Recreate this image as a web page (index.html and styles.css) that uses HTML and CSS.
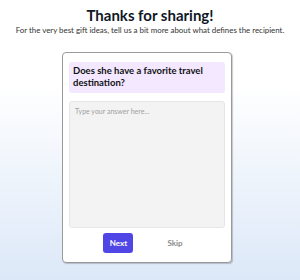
FILE: index.html
```html
<!DOCTYPE html>
<html lang="en">
<head>
    <meta charset="UTF-8">
    <meta name="viewport" content="width=device-width, initial-scale=1.0">
    <title>Thanks for sharing</title>
    <link rel="stylesheet" href="styles.css">
</head>
<body>

    <header class="intro">
        <h1>Thanks for sharing!</h1>
        <p>For the very best gift ideas, tell us a bit more about what defines the recipient.</p>
    </header>

    <div class="card">
        <div class="question">Does she have a favorite travel destination?</div>
        <textarea class="answer" placeholder="Type your answer here..."></textarea>
        <div class="actions">
            <button class="btn-next">Next</button>
            <button class="btn-skip">Skip</button>
        </div>
    </div>

</body>
</html>
```

FILE: styles.css
```css
body {
    margin: 0;
    height: 280px;
    font-family: Lato, "Open Sans", Arial, sans-serif;
    color: #1a1a2e;
    background: linear-gradient(to bottom, #ffffff 0%, #ffffff 30%, #dce8f8 100%);
}
.intro {
    text-align: center;
    padding-top: 5px;
}
.intro h1 {
    margin: 0;
    font-size: 15px;
    font-weight: 700;
    line-height: 20px;
    color: #111827;
}
.intro p {
    margin: 0;
    font-size: 7.9px;
    line-height: 10px;
    color: #333;
}
.card {
    box-sizing: border-box;
    width: 170px;
    height: 211px;
    margin: 17px 0 0 62px;
    padding: 9px 6px 9px 6px;
    background: #fff;
    border: 1px solid #9a9a9a;
    border-radius: 4px;
    box-shadow: 1px 1px 1px rgba(0, 0, 0, 0.2);
    display: flex;
    flex-direction: column;
}
.question {
    background: #f3e8ff;
    border-radius: 3px;
    padding: 3px 4px 4px;
    font-size: 9.5px;
    font-weight: 700;
    line-height: 12px;
    color: #111;
}
.answer {
    margin-top: 8px;
    height: 127px;
    resize: none;
    background: #f3f3f3;
    border: 1px solid #e6e6e6;
    border-radius: 3px;
    padding: 5px 5px;
    font-family: inherit;
    font-size: 7px;
    box-sizing: border-box;
}
.answer::placeholder {
    color: #a0a0a0;
}
.actions {
    display: flex;
    justify-content: center;
    gap: 28px;
    margin-top: 5px;
    padding-right: 2px;
}
.btn-next {
    background: #4f46e5;
    color: #fff;
    border: none;
    border-radius: 3px;
    width: 30px;
    height: 20px;
    font-family: inherit;
    font-size: 8px;
    font-weight: 700;
    cursor: pointer;
}
.btn-skip {
    background: none;
    border: none;
    color: #8a8a8a;
    font-family: inherit;
    font-size: 8px;
    font-weight: 700;
    cursor: pointer;
}
```
